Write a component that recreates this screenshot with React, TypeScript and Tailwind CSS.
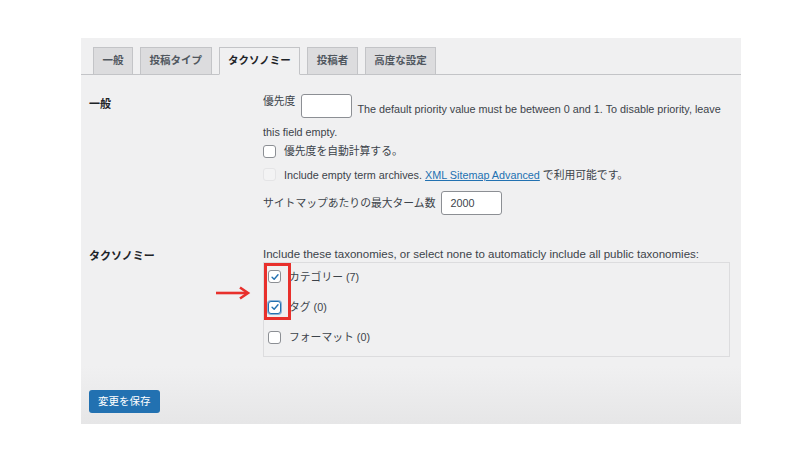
import React from 'react';

const jp = { fontFamily: '"Liberation Sans", "Noto Sans CJK JP", sans-serif' };

const tabs = ['一般', '投稿タイプ', 'タクソノミー', '投稿者', '高度な設定'];

const Check = ({ checked = false, focus = false, disabled = false }: { checked?: boolean; focus?: boolean; disabled?: boolean }) => (
  <span
    className={
      'inline-flex h-[13px] w-[13px] shrink-0 items-center justify-center rounded-[3px] ' +
      (disabled
        ? 'border border-[#e4e4e6] bg-[#f3f3f4]'
        : focus
        ? 'border-[1.5px] border-[#2271b1] bg-white shadow-[0_0_0_1px_#8fb4d6]'
        : 'border border-[#8c8f94] bg-white')
    }
  >
    {checked && (
      <svg viewBox="0 0 12 12" className="h-[10px] w-[10px]">
        <path d="M2.5 6.2 L5 8.6 L9.6 3.4" fill="none" stroke="#2271b1" strokeWidth="1.7" strokeLinecap="round" strokeLinejoin="round" />
      </svg>
    )}
  </span>
);

export default function App() {
  return (
    <div className="h-[457px] w-[812px] bg-white pt-[38px]" style={jp}>
      <div className="relative ml-[81px] h-[386px] w-[660px] bg-gradient-to-b from-[#f0f0f1] from-85% to-[#e6e6e7] text-[#3c434a]">
        {/* tabs */}
        <div className="flex gap-[7px] border-b border-[#c3c4c7] pl-[12px] pt-[9px]">
          {tabs.map((t, i) => (
            <div
              key={t}
              className={
                'mb-[-1px] flex h-[28px] items-center border border-[#c3c4c7] px-[8.5px] text-[10.5px] font-bold ' +
                (i === 2 ? 'border-b-[#f0f0f1] bg-[#f0f0f1] text-[#1d2327]' : 'bg-[#dcdcde] text-[#50575e]')
              }
            >
              {t}
            </div>
          ))}
        </div>

        {/* 一般 */}
        <div className="flex pl-[8px] pt-[18px]">
          <div className="w-[174px] pt-[3px] text-[11px] font-bold text-[#1d2327]">一般</div>
          <div className="flex flex-col text-[10.8px]">
            <div className="flex items-end">
              <span className="mb-[9px]">優先度</span>
              <span className="ml-[6px] h-[24px] w-[51px] rounded-[3px] border border-[#8c8f94] bg-white" />
              <span className="mb-[1px] ml-[5px]">The default priority value must be between 0 and 1. To disable priority, leave</span>
            </div>
            <div className="mt-[6px]">this field empty.</div>
            <div className="mt-[3px] flex items-center gap-[8px]">
              <Check />
              <span>優先度を自動計算する。</span>
            </div>
            <div className="mt-[7px] flex items-center gap-[8px]">
              <Check disabled />
              <span>
                Include empty term archives.{' '}
                <span className="text-[#2271b1] underline">XML Sitemap Advanced</span> で利用可能です。
              </span>
            </div>
            <div className="mt-[8px] flex items-center gap-[6px]">
              <span>サイトマップあたりの最大ターム数</span>
              <span className="flex h-[24px] w-[61px] items-center rounded-[3px] border border-[#8c8f94] bg-white pl-[8px]">2000</span>
            </div>
          </div>
        </div>

        {/* タクソノミー */}
        <div className="flex pl-[8px] pt-[31px]">
          <div className="w-[174px] pt-[2px] text-[11px] font-bold text-[#1d2327]">タクソノミー</div>
          <div className="flex flex-col text-[10.8px]">
            <div className="text-[11.5px] leading-[16px]">Include these taxonomies, or select none to automaticly include all public taxonomies:</div>
            <div className="flex h-[95px] w-[467px] flex-col gap-[14px] border border-[#dcdcde] pl-[4px] pt-[6px]">
              <div className="flex items-center gap-[8px]">
                <Check checked />
                <span>カテゴリー (7)</span>
              </div>
              <div className="flex items-center gap-[8px]">
                <Check checked focus />
                <span>タグ (0)</span>
              </div>
              <div className="flex items-center gap-[8px]">
                <Check />
                <span>フォーマット (0)</span>
              </div>
            </div>
          </div>
        </div>

        {/* save */}
        <div className="pl-[8px] pt-[31px]">
          <button className="h-[23px] rounded-[3px] bg-[#2271b1] px-[9px] text-[10.5px] text-white">変更を保存</button>
        </div>

        {/* annotation */}
        <div className="absolute left-[183px] top-[225px] h-[57px] w-[27px] border-[3px] border-[#e8302c]" />
        <svg className="absolute left-[135px] top-[248px]" width="36" height="14" viewBox="0 0 36 14">
          <path d="M0 7 H30" stroke="#e8302c" strokeWidth="2.6" />
          <path d="M24 1.5 L32 7 L24 12.5" fill="none" stroke="#e8302c" strokeWidth="2.6" strokeLinejoin="miter" />
        </svg>
      </div>
    </div>
  );
}
